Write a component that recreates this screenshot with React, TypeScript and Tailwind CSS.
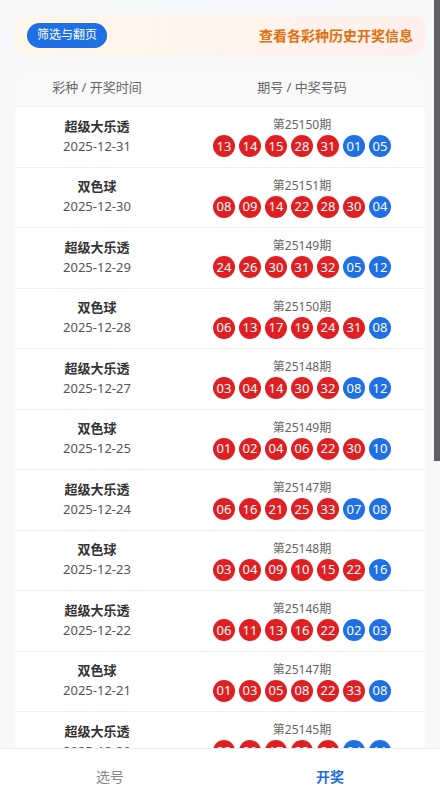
import React from 'react';

type Draw = {
  name: string;
  date: string;
  issue: string;
  red: string[];
  blue: string[];
};

const draws: Draw[] = [
  { name: '超级大乐透', date: '2025-12-31', issue: '25150', red: ['13', '14', '15', '28', '31'], blue: ['01', '05'] },
  { name: '双色球', date: '2025-12-30', issue: '25151', red: ['08', '09', '14', '22', '28', '30'], blue: ['04'] },
  { name: '超级大乐透', date: '2025-12-29', issue: '25149', red: ['24', '26', '30', '31', '32'], blue: ['05', '12'] },
  { name: '双色球', date: '2025-12-28', issue: '25150', red: ['06', '13', '17', '19', '24', '31'], blue: ['08'] },
  { name: '超级大乐透', date: '2025-12-27', issue: '25148', red: ['03', '04', '14', '30', '32'], blue: ['08', '12'] },
  { name: '双色球', date: '2025-12-25', issue: '25149', red: ['01', '02', '04', '06', '22', '30'], blue: ['10'] },
  { name: '超级大乐透', date: '2025-12-24', issue: '25147', red: ['06', '16', '21', '25', '33'], blue: ['07', '08'] },
  { name: '双色球', date: '2025-12-23', issue: '25148', red: ['03', '04', '09', '10', '15', '22'], blue: ['16'] },
  { name: '超级大乐透', date: '2025-12-22', issue: '25146', red: ['06', '11', '13', '16', '22'], blue: ['02', '03'] },
  { name: '双色球', date: '2025-12-21', issue: '25147', red: ['01', '03', '05', '08', '22', '33'], blue: ['08'] },
  { name: '超级大乐透', date: '2025-12-20', issue: '25145', red: ['02', '09', '17', '23', '34'], blue: ['04', '11'] },
  { name: '双色球', date: '2025-12-18', issue: '25146', red: ['05', '07', '12', '18', '26', '29'], blue: ['13'] },
  { name: '超级大乐透', date: '2025-12-17', issue: '25144', red: ['01', '08', '19', '27', '35'], blue: ['03', '09'] },
  { name: '双色球', date: '2025-12-16', issue: '25145', red: ['02', '11', '15', '20', '27', '32'], blue: ['06'] },
  { name: '超级大乐透', date: '2025-12-15', issue: '25143', red: ['04', '10', '18', '22', '29'], blue: ['01', '10'] },
  { name: '双色球', date: '2025-12-14', issue: '25144', red: ['03', '08', '13', '21', '25', '31'], blue: ['12'] },
  { name: '超级大乐透', date: '2025-12-13', issue: '25142', red: ['07', '12', '20', '26', '33'], blue: ['05', '06'] },
  { name: '双色球', date: '2025-12-11', issue: '25143', red: ['01', '06', '10', '17', '23', '28'], blue: ['02'] },
  { name: '超级大乐透', date: '2025-12-10', issue: '25141', red: ['03', '15', '24', '30', '34'], blue: ['02', '07'] },
  { name: '双色球', date: '2025-12-09', issue: '25142', red: ['04', '09', '16', '19', '27', '33'], blue: ['15'] },
];

const Ball: React.FC<{ n: string; blue?: boolean }> = ({ n, blue }) => (
  <span
    className={`w-[22px] h-[22px] rounded-full flex items-center justify-center text-[13px] leading-none text-white ${
      blue ? 'bg-[#1f6fe5]' : 'bg-[#e01f22]'
    }`}
  >
    {n}
  </span>
);

export default function App() {
  return (
    <div
      className="relative h-screen overflow-y-auto bg-[#f7f8fa]"
      style={{ fontFamily: '"Noto Sans", "Noto Sans CJK SC", sans-serif' }}
    >
      <div className="pt-[15px] pl-[15px] pr-[15px] pb-[85px] flex flex-col gap-[15px]">
        <div className="h-[40px] rounded-xl bg-linear-to-r from-[#fff7e9] to-[#fff0ee] flex items-center justify-between pl-[12px] pr-[12px]">
          <button className="h-[25px] px-[10px] rounded-full bg-[#1f6fe5] text-white text-[12px] leading-none">
            筛选与翻页
          </button>
          <span className="text-[14px] font-bold text-[#e2700e]">查看各彩种历史开奖信息</span>
        </div>

        <div className="bg-white rounded-xl overflow-hidden">
          <div className="h-[37px] bg-[#f9f9fa] border-b border-[#eeeff1] flex items-center text-[13px] text-[#666]">
            <div className="w-2/5 text-center">彩种 / 开奖时间</div>
            <div className="w-3/5 text-center">期号 / 中奖号码</div>
          </div>
          {draws.map((d, i) => (
            <div key={i} className="h-[60.5px] border-b border-[#eeeff1] flex items-center">
              <div className="w-2/5 flex flex-col items-center -mt-[2px]">
                <span className="text-[13px] font-bold text-[#333] leading-[20px]">{d.name}</span>
                <span className="text-[13px] text-[#555] leading-[20px]">{d.date}</span>
              </div>
              <div className="w-3/5 flex flex-col items-center">
                <span className="text-[12px] text-[#666] leading-[18px]">第{d.issue}期</span>
                <div className="flex gap-[4px] mt-[1px]">
                  {d.red.map((n, j) => (
                    <Ball key={`r${j}`} n={n} />
                  ))}
                  {d.blue.map((n, j) => (
                    <Ball key={`b${j}`} n={n} blue />
                  ))}
                </div>
              </div>
            </div>
          ))}
        </div>
      </div>

      {/* scrollbar thumb */}
      <div className="fixed top-0 right-0 w-[6px] h-[461px] bg-[#5f6064]" />

      <div className="fixed left-0 right-0 bottom-0 h-[56px] bg-white border-t border-[#ebedf0] flex">
        <div className="w-1/2 flex items-center justify-center text-[14px] text-[#888]">选号</div>
        <div className="w-1/2 flex items-center justify-center text-[14px] font-bold text-[#1f6fe5]">开奖</div>
      </div>
    </div>
  );
}
